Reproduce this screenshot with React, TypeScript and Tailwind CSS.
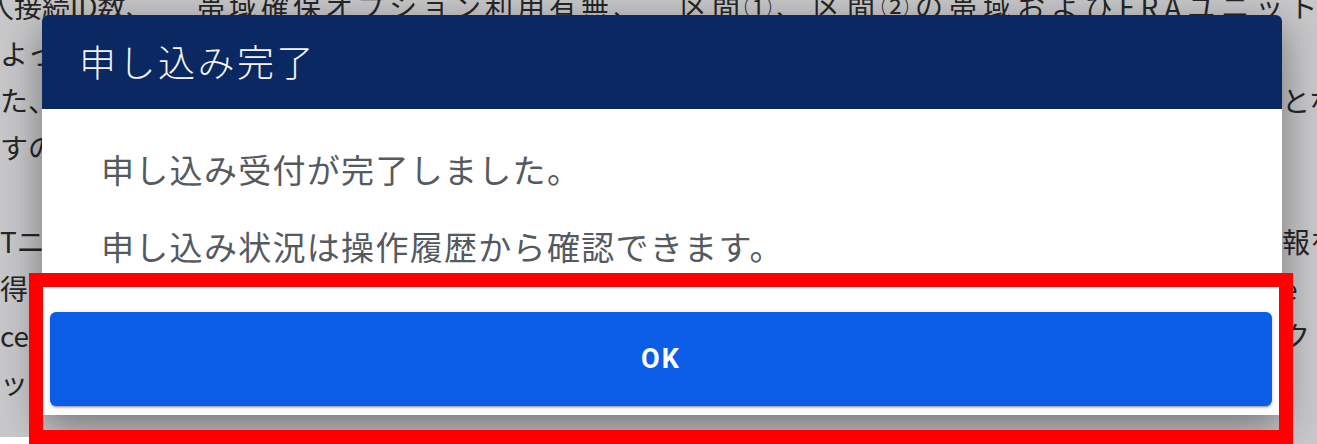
import React from "react";

const jp = { fontFamily: '"Noto Sans CJK JP", "Noto Sans", sans-serif' };

function BgLine({ left, right }: { left: string; right?: string }) {
  return (
    <div className="flex w-[1345px] whitespace-nowrap">
      <div className="flex-1 overflow-hidden">{left}</div>
      <div className="w-[63px] overflow-hidden">{right ?? ""}</div>
    </div>
  );
}

export default function App() {
  return (
    <div
      className="relative w-[1317px] h-[444px] overflow-hidden bg-[#c8c8ca]"
      style={jp}
    >
      {/* page behind the modal */}
      <div className="mt-[-17px] text-[28px] leading-[47px] text-[#262626]">
        <div className="flex whitespace-nowrap">
          <span className="ml-[-14px] w-[211px] shrink-0">入接続ID数、</span>
          <span className="w-[483px] shrink-0 tracking-[4px]">帯域確保オプション利用有無、</span>
          <span className="w-[133px] shrink-0 tracking-[4px]">区間①、</span>
          <span className="shrink-0 tracking-[6px]">区間②の帯域およびFRAユニット</span>
        </div>
        <BgLine left="よっ" />
        <BgLine left="た、" right="とな" />
        <BgLine left="すの" />
        <div className="h-[47px]" />
        <BgLine left="Tニ" right="報を" />
        <BgLine left="得" right="e" />
        <BgLine left="ce" right="ク" />
        <BgLine left="ッ・" />
      </div>

      {/* modal dialog */}
      <div className="absolute left-[42px] top-[15px] flex h-[400px] w-[1240px] flex-col overflow-hidden rounded-t-[6px] bg-white shadow-[0_12px_40px_rgba(0,0,0,0.42)]">
        <div className="flex h-[94px] shrink-0 items-center bg-[#0a2861] px-[37px] text-[37px] font-light tracking-[2.5px] text-[#f4f4f4]">
          申し込み完了
        </div>
        <div className="flex flex-col gap-[37px] pl-[59px] pt-[40px] text-[33px] leading-[40px] tracking-[1.3px] text-[#555a60]">
          <p>申し込み受付が完了しました。</p>
          <p>申し込み状況は操作履歴から確認できます。</p>
        </div>
        <div className="mt-auto pb-[9px] pl-[8px] pr-[10px]">
          <button
            className="flex h-[94px] w-full items-center justify-center rounded-[6px] bg-[#0b5de8] text-[27px] font-bold tracking-[2px] text-white shadow-[0_3px_1px_-2px_rgba(0,0,0,0.2),0_2px_2px_0_rgba(0,0,0,0.14),0_1px_5px_0_rgba(0,0,0,0.12)]"
            style={{ fontFamily: 'Roboto, "Noto Sans", sans-serif' }}
          >
            OK
          </button>
        </div>
      </div>

      {/* highlight annotation */}
      <div className="absolute left-[29px] top-[273px] h-[171px] w-[1264px] border-[14px] border-[#ff0000]" />
      <div className="absolute bottom-0 left-0 h-[7px] w-[29px] bg-white" />
    </div>
  );
}
